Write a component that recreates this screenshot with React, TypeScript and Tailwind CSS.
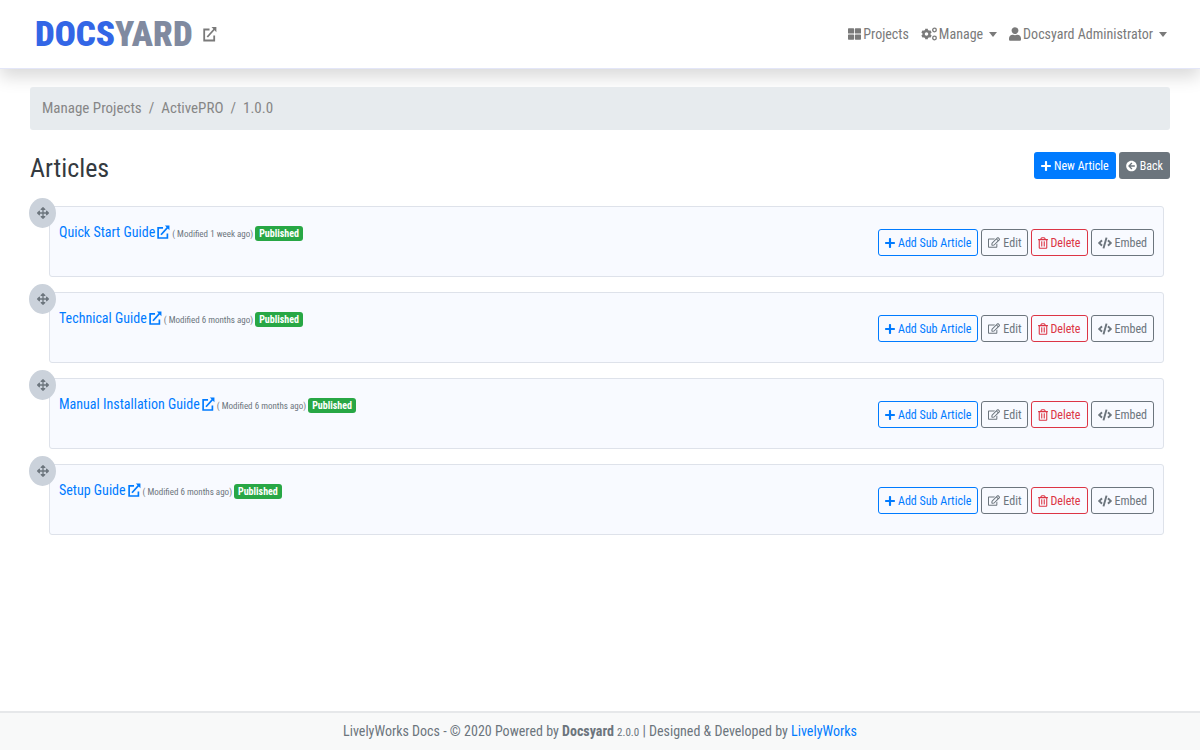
import { FaArrowCircleLeft, FaArrowsAlt, FaCode, FaCog, FaPlus, FaRegEdit, FaRegTrashAlt, FaThLarge, FaUser } from "react-icons/fa";

type Article = {
  id: number;
  title: string;
  modified: string;
};

const articles: Article[] = [
  { id: 1, title: "Quick Start Guide", modified: "1 week ago" },
  { id: 2, title: "Technical Guide", modified: "6 months ago" },
  { id: 3, title: "Manual Installation Guide", modified: "6 months ago" },
  { id: 4, title: "Setup Guide", modified: "6 months ago" },
];

function ExternalIcon({ className = "" }: { className?: string }) {
  return (
    <svg viewBox="0 0 14 16" className={className} fill="none" stroke="currentColor" strokeWidth="1.8" aria-hidden="true">
      <path d="M6.5 3.5H1.2v11h10v-5" />
      <path d="M4.3 11 11.5 3" />
      <path d="M8.5 1H13.4V6.2Z" fill="currentColor" stroke="none" />
    </svg>
  );
}

function CogsIcon() {
  return (
    <span className="flex h-[14px] w-4 items-center" aria-hidden="true">
      <FaCog className="h-3 w-[11px]" />
      <svg viewBox="0 0 5 14" className="h-[14px] w-[5px]" fill="none" stroke="currentColor" strokeWidth="1.3">
        <circle cx="2.5" cy="3" r="1.8" />
        <circle cx="2.5" cy="11" r="1.8" />
      </svg>
    </span>
  );
}

function Caret() {
  return <span className="ml-1 border-x-4 border-t-[5px] border-x-transparent border-t-current" />;
}

function ArticleRow({ article }: { article: Article }) {
  return (
    <li className="relative ml-[19px] mr-[6px] flex h-[71px] justify-between rounded-[3px] border border-[#dee2ea] bg-[#f8faff] px-[9px]">
      <button
        aria-label={`Move ${article.title}`}
        className="absolute -left-[21px] -top-[9px] flex h-[30px] w-[27px] items-center justify-center rounded-[50%] bg-[#cbd2db] text-[#6c757d]"
      >
        <FaArrowsAlt className="h-[14px] w-3" />
      </button>
      <div className="flex items-baseline gap-[2px] pt-[15px]">
        <a href="#" className="flex items-center gap-[2px] text-sm text-[#007bff]">
          {article.title}
          <ExternalIcon className="h-4 w-[13px]" />
        </a>
        <small className="text-[9px] text-[#6c757d]">( Modified {article.modified})</small>
        <span className="rounded-[3px] bg-[#28a745] px-1 text-[10px] font-bold leading-[15px] text-white">Published</span>
      </div>
      <div className="flex items-center gap-[3px] pt-[2px] text-xs">
        <button className="flex h-[27px] items-center gap-[3px] rounded-[3px] border border-[#007bff] px-[6px] text-[#007bff]">
          <FaPlus className="h-3 w-[10px]" />
          Add Sub Article
        </button>
        <button className="flex h-[27px] items-center gap-[3px] rounded-[3px] border border-[#6c757d] px-[6px] text-[#6c757d]">
          <FaRegEdit className="h-[13px] w-3" />
          Edit
        </button>
        <button className="flex h-[27px] items-center gap-[2px] rounded-[3px] border border-[#dc3545] px-[6px] text-[#dc3545]">
          <FaRegTrashAlt className="h-3 w-[10px]" />
          Delete
        </button>
        <button className="flex h-[27px] items-center gap-[3px] rounded-[3px] border border-[#6c757d] px-[6px] text-[#6c757d]">
          <FaCode className="h-3 w-[14px]" />
          Embed
        </button>
      </div>
    </li>
  );
}

export default function App() {
  return (
    <div className="flex min-h-screen flex-col bg-white font-['Roboto_Condensed','Roboto',sans-serif] text-[#343a40]">
      <header className="flex h-[69px] items-center justify-between border-b border-[#e3e6f8] pl-[35px] pr-[33px] text-[#7a7a7a] shadow-[0_8px_16px_rgba(0,0,0,0.15)]">
        <div className="flex items-center gap-[10px]">
          <a href="#" className="text-[35px] font-black leading-none text-[#3366e6]">
            DOCS<span className="text-[#808aa0]">YARD</span>
          </a>
          <a href="#" aria-label="Open site">
            <ExternalIcon className="h-4 w-[14px]" />
          </a>
        </div>
        <nav className="flex items-center gap-3 text-sm">
          <a href="#" className="flex items-center gap-[2px]">
            <FaThLarge className="h-[14px] w-[13px]" />
            Projects
          </a>
          <button className="flex items-center gap-[2px]">
            <CogsIcon />
            Manage
            <Caret />
          </button>
          <button className="flex items-center gap-[2px]">
            <FaUser className="h-[14px] w-[12px]" />
            Docsyard Administrator
            <Caret />
          </button>
        </nav>
      </header>

      <main className="flex-1 px-[30px] pt-[18px]">
        <nav aria-label="Breadcrumb" className="flex h-[43px] items-center gap-[7px] rounded-[3px] bg-[#e7ebee] px-3 text-[15px] text-[#868686]">
          <a href="#">Manage Projects</a>
          <span>/</span>
          <a href="#">ActivePRO</a>
          <span>/</span>
          <span>1.0.0</span>
        </nav>

        <div className="mt-[22px] flex items-start justify-between">
          <h1 className="text-[26px] leading-8">Articles</h1>
          <div className="flex gap-[3px] text-xs text-white">
            <button className="flex h-[27px] items-center gap-[3px] rounded-[3px] bg-[#007bff] px-[7px]">
              <FaPlus className="h-3 w-[10px]" />
              New Article
            </button>
            <button className="flex h-[27px] items-center gap-[3px] rounded-[3px] bg-[#6c757d] px-[7px]">
              <FaArrowCircleLeft className="h-3 w-[11px]" />
              Back
            </button>
          </div>
        </div>

        <ul className="mt-[22px] flex flex-col gap-[15px]">
          {articles.map((article) => (
            <ArticleRow key={article.id} article={article} />
          ))}
        </ul>
      </main>

      <footer className="flex h-[39px] items-center justify-center border-t-2 border-[#e6e8ea] bg-[#f8f9f9] pb-[2px] text-sm text-[#6c757d]">
        <p>
          LivelyWorks Docs - © 2020 Powered by <strong>Docsyard</strong> <small className="text-[11px]">2.0.0</small> | Designed &amp; Developed by{" "}
          <a href="#" className="text-[#007bff]">LivelyWorks</a>
        </p>
      </footer>
    </div>
  );
}
